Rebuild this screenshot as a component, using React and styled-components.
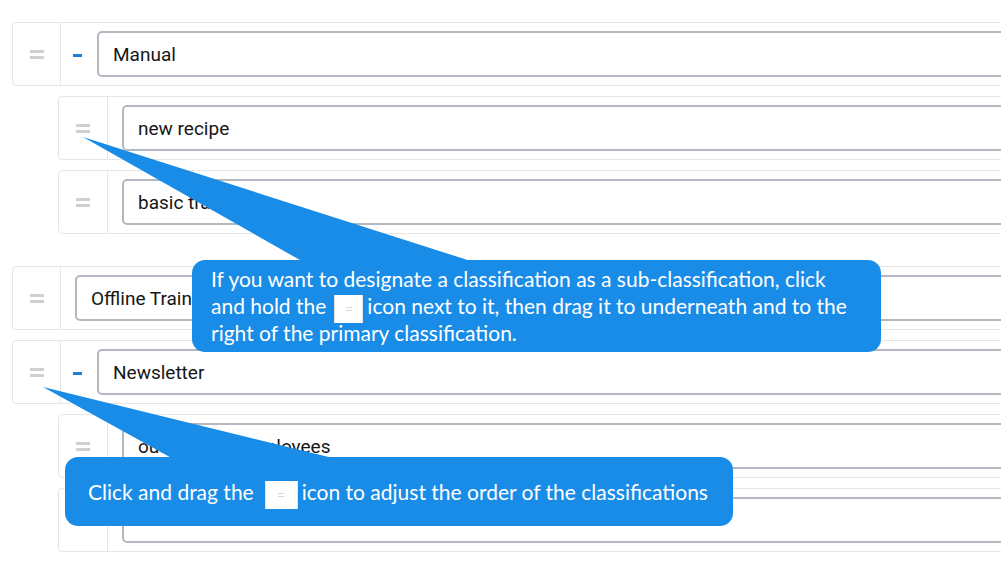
import styled, { createGlobalStyle } from 'styled-components';

const classifications = [
    {
        id: 1,
        name: 'Manual',
        children: [
            { id: 11, name: 'new recipe' },
            { id: 12, name: 'basic training' },
        ],
    },
    { id: 2, name: 'Offline Training', children: [] },
    {
        id: 3,
        name: 'Newsletter',
        children: [
            { id: 31, name: 'outreach to employees' },
            { id: 32, name: '' },
        ],
    },
];

const GlobalStyle = createGlobalStyle`
  body {
    margin: 0;
    background: #ffffff;
    font-family: Roboto, "Liberation Sans", sans-serif;
    overflow: hidden;
  }
`;

const Page = styled.div`
  position: relative;
  width: 1001px;
  height: 580px;
  overflow: hidden;
`;

const List = styled.div`
  display: flex;
  flex-direction: column;
  gap: 10px;
  width: 1240px;
  padding: 22px 0 0 12px;
`;

const Group = styled.div`
  display: flex;
  flex-direction: column;
  gap: 10px;
  padding-bottom: ${(p) => (p.$hasChildren ? 22 : 0)}px;
`;

const Children = styled.div`
  display: flex;
  flex-direction: column;
  gap: 10px;
  margin-left: 46px;
`;

const Card = styled.div`
  display: flex;
  height: 64px;
  box-sizing: border-box;
  border: 1px solid #e6e6e6;
  border-radius: 4px;
  background: #ffffff;
`;

const HandleCell = styled.div`
  width: ${(p) => (p.$child ? 48 : 47)}px;
  flex-shrink: 0;
  display: flex;
  align-items: center;
  justify-content: center;
  border-right: 1px solid #e6e6e6;
  cursor: grab;
`;

/* the two-bar drag handle, also used small inside the callouts */
const Bars = styled.span`
  display: flex;
  flex-direction: column;
  gap: ${(p) => (p.$small ? 2 : 3)}px;
  span {
    display: block;
    width: ${(p) => (p.$small ? 6 : 14)}px;
    height: ${(p) => (p.$small ? 1 : 3)}px;
    background: ${(p) => (p.$small ? '#d6d6d6' : '#d0d0d0')};
  }
`;

const Body = styled.div`
  flex: 1;
  display: flex;
  align-items: center;
  padding: 0 0 0 14px;
`;

const Toggle = styled.button`
  width: 24px;
  height: 46px;
  margin-left: -2px;
  padding: 0;
  border: 0;
  background: none;
  display: flex;
  align-items: center;
  flex-shrink: 0;
  cursor: pointer;
  span {
    display: block;
    width: 9px;
    height: 3px;
    margin-top: 3px;
    background: #1c7fdc;
  }
`;

const NameInput = styled.input`
  flex: 1;
  height: 46px;
  box-sizing: border-box;
  border: 2px solid #b3b8c0;
  border-radius: 5px;
  padding: 0 14px;
  font-family: Roboto, "Liberation Sans", sans-serif;
  font-size: 19px;
  color: #161616;
  background: #ffffff;
  outline: none;
`;

const Tails = styled.svg`
  position: absolute;
  left: 0;
  top: 0;
  pointer-events: none;
`;

const Callout = styled.div`
  position: absolute;
  left: ${(p) => p.$left}px;
  top: ${(p) => p.$top}px;
  width: ${(p) => p.$width}px;
  height: ${(p) => p.$height}px;
  box-sizing: border-box;
  padding: ${(p) => p.$pad};
  background: #198ce8;
  border-radius: 13px;
  color: #ffffff;
  font-family: Lato, "Open Sans", sans-serif;
  font-size: 21px;
  line-height: 27px;
  white-space: nowrap;
`;

const IconChip = styled.span`
  display: inline-flex;
  align-items: center;
  justify-content: center;
  width: ${(p) => p.$width}px;
  height: 28px;
  margin: -4px 4px -4px ${(p) => p.$gap}px;
  vertical-align: middle;
  background: #ffffff;
  border-left: 1px solid #e3e3e3;
  border-right: 1px solid #e3e3e3;
  box-sizing: border-box;
`;

const Handle = ({ child }) => (
    <HandleCell $child={child}>
        <Bars>
            <span />
            <span />
        </Bars>
    </HandleCell>
);

const Row = ({ item, child, collapsible }) => (
    <Card>
        <Handle child={child} />
        <Body>
            {collapsible && (
                <Toggle aria-label="collapse">
                    <span />
                </Toggle>
            )}
            <NameInput defaultValue={item.name} />
        </Body>
    </Card>
);

const Chip = ({ width, gap }) => (
    <IconChip $width={width} $gap={gap}>
        <Bars $small>
            <span />
            <span />
        </Bars>
    </IconChip>
);

export default function App() {
    return (
        <>
            <GlobalStyle />
            <Page>
                <List>
                    {classifications.map((c) => (
                        <Group key={c.id} $hasChildren={c.children.length > 0}>
                            <Row item={c} collapsible={c.children.length > 0} />
                            {c.children.length > 0 && (
                                <Children>
                                    {c.children.map((sub) => (
                                        <Row key={sub.id} item={sub} child />
                                    ))}
                                </Children>
                            )}
                        </Group>
                    ))}
                </List>

                <Tails width="1001" height="580" viewBox="0 0 1001 580">
                    <polygon points="83,137 307,264 480,264" fill="#198ce8" />
                    <polygon points="43,387 177,461 345,461" fill="#198ce8" />
                </Tails>

                <Callout $left={192} $top={260} $width={689} $height={92} $pad="5px 19px">
                    If you want to designate a classification as a sub-classification, click
                    <br />
                    and hold the<Chip width={29} gap={8} />icon next to it, then drag it to underneath and to the
                    <br />
                    right of the primary classification.
                </Callout>

                <Callout $left={65} $top={457} $width={668} $height={69} $pad="21px 23px">
                    Click and drag the<Chip width={33} gap={11} />icon to adjust the order of the classifications
                </Callout>
            </Page>
        </>
    );
}
